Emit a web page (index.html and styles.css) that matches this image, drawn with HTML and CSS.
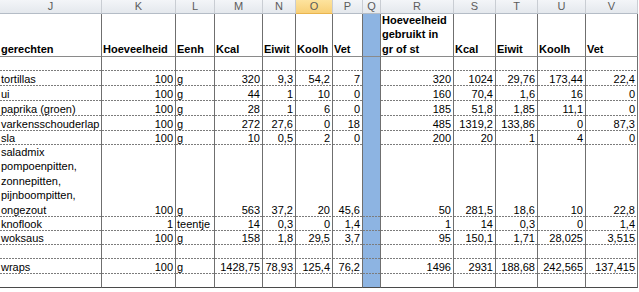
FILE: index.html
```html
<!DOCTYPE html>
<html>
<head>
<meta charset="utf-8">
<link rel="stylesheet" href="styles.css">
</head>
<body>
<div class="sheet">
  <div class="h">J</div><div class="h">K</div><div class="h">L</div><div class="h">M</div><div class="h">N</div><div class="h sel">O</div><div class="h">P</div><div class="h">Q</div><div class="h">R</div><div class="h">S</div><div class="h">T</div><div class="h">U</div><div class="h">V</div>

  <div class="c b top">gerechten</div><div class="c b top">Hoeveelheid</div><div class="c b top">Eenh</div><div class="c b top">Kcal</div><div class="c b top">Eiwit</div><div class="c b top">Koolh</div><div class="c b top">Vet</div><div class="c q top"></div><div class="c b top wrap">Hoeveelheid<br>gebruikt in<br>gr of st</div><div class="c b top">Kcal</div><div class="c b top">Eiwit</div><div class="c b top">Koolh</div><div class="c b top">Vet</div>

  <div class="c d"></div><div class="c d"></div><div class="c d"></div><div class="c d"></div><div class="c d"></div><div class="c d"></div><div class="c d"></div><div class="c q"></div><div class="c d"></div><div class="c d"></div><div class="c d"></div><div class="c d"></div><div class="c d"></div>

  <div class="c d">tortillas</div><div class="c d n">100</div><div class="c d">g</div><div class="c d n">320</div><div class="c d n">9,3</div><div class="c d n">54,2</div><div class="c d n">7</div><div class="c q"></div><div class="c d n">320</div><div class="c d n">1024</div><div class="c d n">29,76</div><div class="c d n">173,44</div><div class="c d n">22,4</div>

  <div class="c d">ui</div><div class="c d n">100</div><div class="c d">g</div><div class="c d n">44</div><div class="c d n">1</div><div class="c d n">10</div><div class="c d n">0</div><div class="c q"></div><div class="c d n">160</div><div class="c d n">70,4</div><div class="c d n">1,6</div><div class="c d n">16</div><div class="c d n">0</div>

  <div class="c d">paprika (groen)</div><div class="c d n">100</div><div class="c d">g</div><div class="c d n">28</div><div class="c d n">1</div><div class="c d n">6</div><div class="c d n">0</div><div class="c q"></div><div class="c d n">185</div><div class="c d n">51,8</div><div class="c d n">1,85</div><div class="c d n">11,1</div><div class="c d n">0</div>

  <div class="c d">varkensschouderlap</div><div class="c d n">100</div><div class="c d">g</div><div class="c d n">272</div><div class="c d n">27,6</div><div class="c d n">0</div><div class="c d n">18</div><div class="c q"></div><div class="c d n">485</div><div class="c d n">1319,2</div><div class="c d n">133,86</div><div class="c d n">0</div><div class="c d n">87,3</div>

  <div class="c d">sla</div><div class="c d n">100</div><div class="c d">g</div><div class="c d n">10</div><div class="c d n">0,5</div><div class="c d n">2</div><div class="c d n">0</div><div class="c q"></div><div class="c d n">200</div><div class="c d n">20</div><div class="c d n">1</div><div class="c d n">4</div><div class="c d n">0</div>

  <div class="c d wrap">saladmix<br>pompoenpitten,<br>zonnepitten,<br>pijnboompitten,<br>ongezout</div><div class="c d n">100</div><div class="c d">g</div><div class="c d n">563</div><div class="c d n">37,2</div><div class="c d n">20</div><div class="c d n">45,6</div><div class="c q d"></div><div class="c d n">50</div><div class="c d n">281,5</div><div class="c d n">18,6</div><div class="c d n">10</div><div class="c d n">22,8</div>

  <div class="c d">knoflook</div><div class="c d n">1</div><div class="c d">teentje</div><div class="c d n">14</div><div class="c d n">0,3</div><div class="c d n">0</div><div class="c d n">1,4</div><div class="c q d"></div><div class="c d n">1</div><div class="c d n">14</div><div class="c d n">0,3</div><div class="c d n">0</div><div class="c d n">1,4</div>

  <div class="c d">woksaus</div><div class="c d n">100</div><div class="c d">g</div><div class="c d n">158</div><div class="c d n">1,8</div><div class="c d n">29,5</div><div class="c d n">3,7</div><div class="c q d"></div><div class="c d n">95</div><div class="c d n">150,1</div><div class="c d n">1,71</div><div class="c d n">28,025</div><div class="c d n">3,515</div>

  <div class="c d"></div><div class="c d"></div><div class="c d"></div><div class="c d"></div><div class="c d"></div><div class="c d"></div><div class="c d"></div><div class="c q d"></div><div class="c d"></div><div class="c d"></div><div class="c d"></div><div class="c d"></div><div class="c d"></div>

  <div class="c d">wraps</div><div class="c d n">100</div><div class="c d">g</div><div class="c d n">1428,75</div><div class="c d n">78,93</div><div class="c d n">125,4</div><div class="c d n">76,2</div><div class="c q d"></div><div class="c d n">1496</div><div class="c d n">2931</div><div class="c d n">188,68</div><div class="c d n">242,565</div><div class="c d n">137,415</div>

  <div class="c end"></div><div class="c end"></div><div class="c end"></div><div class="c end"></div><div class="c end"></div><div class="c end"></div><div class="c end"></div><div class="c q end"></div><div class="c end"></div><div class="c end"></div><div class="c end"></div><div class="c end"></div><div class="c end"></div>
</div>
</body>
</html>
```

FILE: styles.css
```css
html, body {
  margin: 0;
  padding: 0;
  background: #ffffff;
}

body {
  width: 639px;
  height: 292px;
  overflow: hidden;
  font-family: "Liberation Sans", Arial, sans-serif;
  font-size: 11px;
  color: #000;
}

.sheet {
  display: grid;
  grid-template-columns: 102px 74px 39px 48px 33px 37px 30px 18px 73px 42px 42px 48px 52px;
  grid-template-rows: 14px 43px 14px 15px 15px 15px 15px 14px 72px 14px 14px 14px 15px 14px;
}

.h {
  box-sizing: border-box;
  background: linear-gradient(#f3f5f8, #e4e8ed);
  border-right: 1px solid #c9cdd3;
  border-bottom: 1px solid #b4bcc6;
  color: #5b5b5b;
  font-size: 11px;
  line-height: 13px;
  text-align: center;
}

.h.sel {
  background: linear-gradient(#fde39e, #f8d077);
  border-bottom-color: #e9b54f;
}

.c {
  box-sizing: border-box;
  border-right: 1px solid #6f6f6f;
  padding: 0 2px 0 1px;
  line-height: 14px;
  white-space: nowrap;
  display: flex;
  align-items: flex-end;
  overflow: visible;
}

.n {
  justify-content: flex-end;
}

.b {
  font-weight: bold;
}

.c.wrap {
  align-self: stretch;
  display: flex;
  flex-direction: column;
  justify-content: flex-end;
  align-items: flex-start;
  line-height: 14.4px;
}

.top {
  border-bottom: 1px solid #8a8a8a;
}

.d {
  background-image: linear-gradient(to right, #7c7c7c 2px, transparent 2px);
  background-size: 3px 1px;
  background-repeat: repeat-x;
  background-position: left bottom;
}

.q {
  background-color: #8db4e2;
}

.end {
  border-bottom: 1px solid #4a4a4a;
}
```
